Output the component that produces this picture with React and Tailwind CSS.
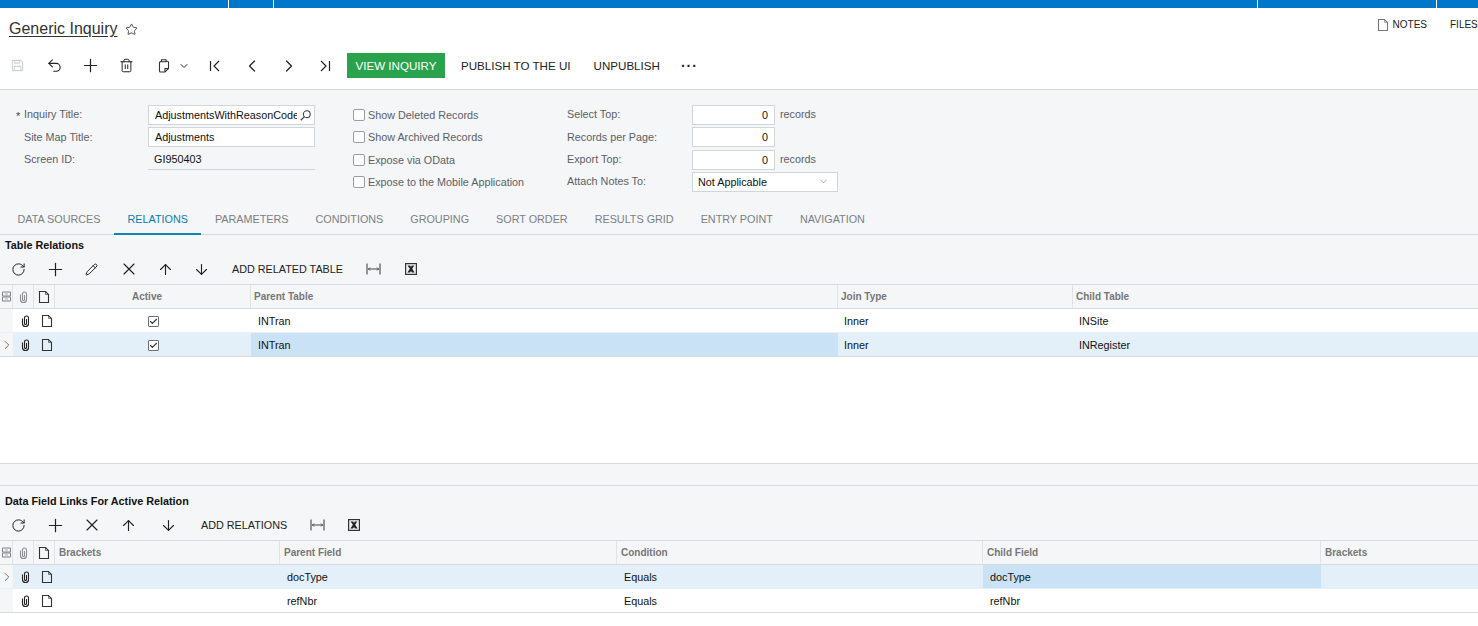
import React from 'react';
import { Plus, X, ArrowUp, ArrowDown, ChevronLeft, ChevronRight, ChevronDown, Star, Pencil, RotateCw, Undo2, Trash2, Check } from 'lucide-react';

const FONT = "font-['Liberation_Sans',Arial,sans-serif]";

const NoteIcon = ({ className = '' }) => (
  <svg width="12" height="14" viewBox="0 0 12 14" fill="none" stroke="currentColor" strokeWidth="1.1" className={className}>
    <path d="M1.5 1.5h6l3 3v8h-9z" />
    <path d="M7.5 1.5v3h3" strokeWidth="0.6" />
  </svg>
);

const ClipIcon = ({ color = '#222', width = 1.1 }) => (
  <svg width="9" height="12" viewBox="0 0 9 12" fill="none" stroke={color} strokeWidth={width}>
    <path d="M1.5 3.5v5a3 3 0 0 0 6 0V3a2 2 0 0 0-4 0v5.5a1 1 0 0 0 2 0V4" />
  </svg>
);

const LensIcon = () => (
  <svg width="11" height="11" viewBox="0 0 11 11" fill="none" stroke="#444" strokeWidth="1.1" className="shrink-0">
    <circle cx="6.8" cy="4.2" r="3.4" />
    <path d="M4.4 6.6L0.8 10.2" strokeWidth="1.3" />
  </svg>
);

const SaveIcon = () => (
  <svg width="13" height="13" viewBox="0 0 14 14" fill="none" stroke="#d0d3d6" strokeWidth="1.2">
    <path d="M1.5 1.5h9l2 2v9h-11z" />
    <path d="M4 1.5v3h5v-3M3.5 12.5v-4.5h7v4.5" />
  </svg>
);

const PasteIcon = () => (
  <svg width="12" height="14" viewBox="0 0 12 14" fill="none" stroke="#333" strokeWidth="1.1">
    <path d="M3 2.2H9.5a1 1 0 0 1 1 1V9.5L7 13H2.5a1 1 0 0 1-1-1V3.2z" />
    <path d="M3.5 0.8h4.5v2H3.5z" fill="#fff" />
    <path d="M7 13V9.5h3.5" />
  </svg>
);

const FirstIcon = () => (
  <svg width="12" height="12" viewBox="0 0 12 12" fill="none" stroke="#222" strokeWidth="1.2">
    <path d="M1.5 1v10M10 1L5 6l5 5" />
  </svg>
);

const LastIcon = () => (
  <svg width="12" height="12" viewBox="0 0 12 12" fill="none" stroke="#222" strokeWidth="1.2">
    <path d="M10.5 1v10M2 1l5 5-5 5" />
  </svg>
);

const FitIcon = () => (
  <svg width="15" height="12" viewBox="0 0 15 12" fill="none" stroke="#444" strokeWidth="1.1">
    <path d="M1 0.5v11M14 0.5v11M2 6h11" />
    <path d="M4 4.5L2.5 6 4 7.5M11 4.5L12.5 6 11 7.5" strokeWidth="0.9" />
  </svg>
);

const ExcelIcon = () => (
  <svg width="12" height="12" viewBox="0 0 12 12" fill="none">
    <rect x="0.6" y="0.6" width="10.8" height="10.8" stroke="#333" strokeWidth="1.2" fill="#eef0f2" />
    <path d="M2.5 2.5h2.7L6 3.9l.8-1.4h2.4L7.2 5.8l2.4 3.7H6.9L6 8 5 9.5H2.4l2.5-3.7z" fill="#222" />
  </svg>
);

const CheckIcon = ({ checked }) => (
  <span className="flex h-[11px] w-[11px] items-center justify-center rounded-[1px] border border-[#6b6f73] bg-white">
    {checked && <Check size={9} strokeWidth={3} color="#333" />}
  </span>
);

const IconBtn = ({ x, children }) => (
  <span className={`flex h-full items-center justify-center [&>svg]:shrink-0 ${x}`}>{children}</span>
);

const FormLabel = ({ children, star }) => (
  <div className="relative flex h-5 items-center pb-px text-[#5c6066]">
    {star && <span className="absolute left-[-8px] top-[3px] text-[#444]">*</span>}
    {children}
  </div>
);

const Box = ({ children, className = '' }) => (
  <div className={`flex h-5 items-center border border-[#d2d5d9] bg-white px-[6px] text-[#111] ${className}`}>{children}</div>
);

const Toggle = ({ label }) => (
  <label className="flex h-5 items-center gap-[3px] text-[#5c6066]">
    <span className="h-3 w-3 rounded-[2px] border border-[#9a9ea3] bg-white" />
    {label}
  </label>
);

const TABS = ['DATA SOURCES', 'RELATIONS', 'PARAMETERS', 'CONDITIONS', 'GROUPING', 'SORT ORDER', 'RESULTS GRID', 'ENTRY POINT', 'NAVIGATION'];

const HeadCells = () => (
  <>
    <div className="flex items-center justify-center border-r border-[#e1e3e6]">
      <svg width="9" height="11" viewBox="0 0 9 11" fill="none" stroke="#808387" strokeWidth="1">
        <path d="M.5 1h8v4h-8zM.5 6h8v4h-8z" />
        <path d="M3 3h3M3 8h3" stroke="#a5a8ab" />
      </svg>
    </div>
    <div className="flex items-center justify-center border-r border-[#e1e3e6]">
      <ClipIcon color="#8c8f93" />
    </div>
    <div className="flex items-center justify-center border-r border-[#e1e3e6] text-[#333]">
      <NoteIcon />
    </div>
  </>
);

const RowIcons = ({ marker }) => (
  <>
    <div className="flex items-center justify-center bg-[#f4f6f8] text-[#666]">
      {marker && <ChevronRight size={14} strokeWidth={1.6} className="shrink-0" />}
    </div>
    <div className="flex items-center justify-center pl-1 pt-px">
      <ClipIcon />
    </div>
    <div className="flex items-center justify-center pl-1 pt-px text-[#333]">
      <NoteIcon />
    </div>
  </>
);

const RELATION_COLS = 'grid-cols-[13px_21px_21px_196px_587px_235px_1fr]';
const LINK_COLS = 'grid-cols-[13px_21px_21px_225px_337px_366px_338px_1fr]';

const Header = ({ cols, items, pad }) => (
  <div className={`grid h-[25px] border-y border-[#d8dadd] bg-[#f4f6f8] text-[10px] font-bold text-[#777] ${cols}`}>
    <HeadCells />
    {items.map((item, i) => (
      <div key={i} className={`flex items-center border-r border-[#e1e3e6] last:border-r-0 ${pad} ${item === 'Active' ? 'justify-center pr-[14px]' : ''}`}>{item}</div>
    ))}
  </div>
);

const TableToolbar = ({ children }) => (
  <div className="flex h-7 items-center pb-[2px] text-[#222]">{children}</div>
);

const App = () => {
  return (
    <div className={`flex h-[626px] w-[1478px] flex-col overflow-hidden bg-white text-[10.8px] text-[#111] ${FONT}`}>
      {/* barra superior */}
      <div className="flex h-2 shrink-0 bg-[#0077c8]">
        <div className="w-[229px] border-r border-white" />
        <div className="w-[45px] border-r border-white" />
        <div className="w-[984px] border-r border-white" />
        <div className="w-[179px] border-r border-white" />
      </div>

      {/* titulo */}
      <div className="flex h-9 shrink-0 items-start">
        <div className="flex items-center pl-[9px] pt-[9px]">
          <span className="text-[16px] leading-[23px] text-[#333] underline underline-offset-2">Generic Inquiry</span>
          <Star size={13} strokeWidth={1.6} color="#333" className="ml-[7px] mt-[2px]" />
        </div>
        <div className="ml-auto flex items-center pt-[9px] text-[10px] text-[#222]">
          <NoteIcon className="mr-[3px] text-[#777]" />
          <span className="ml-[1px]">NOTES</span>
          <span className="ml-[23px] w-[28px] overflow-hidden whitespace-nowrap">FILES</span>
        </div>
      </div>

      {/* acciones */}
      <div className="flex h-[46px] shrink-0 items-center border-b border-[#d4d6d9] pb-[2px] text-[11.6px] text-[#222]">
        <IconBtn x="ml-[10px] w-[14px]"><SaveIcon /></IconBtn>
        <IconBtn x="ml-[22px] w-[16px]"><Undo2 size={17} strokeWidth={1.5} /></IconBtn>
        <IconBtn x="ml-[21px] w-[14px]"><Plus size={21} strokeWidth={1.4} /></IconBtn>
        <IconBtn x="ml-[22px] w-[14px]"><Trash2 size={15} strokeWidth={1.6} /></IconBtn>
        <IconBtn x="ml-[24px] w-[14px]"><PasteIcon /></IconBtn>
        <IconBtn x="ml-[8px] w-[10px]"><ChevronDown size={12} strokeWidth={2} /></IconBtn>
        <IconBtn x="ml-[20px] w-[12px]"><FirstIcon /></IconBtn>
        <IconBtn x="ml-[25px] w-[12px]"><ChevronLeft size={20} strokeWidth={1.5} /></IconBtn>
        <IconBtn x="ml-[25px] w-[12px]"><ChevronRight size={20} strokeWidth={1.5} /></IconBtn>
        <IconBtn x="ml-[24px] w-[12px]"><LastIcon /></IconBtn>
        <button className="ml-[16px] flex h-[25px] w-[98px] items-center justify-center bg-[#2ba24c] text-[11.6px] text-white">VIEW INQUIRY</button>
        <span className="ml-[16px]">PUBLISH TO THE UI</span>
        <span className="ml-[23px]">UNPUBLISH</span>
        <span className="ml-[21px] text-[14px] font-bold leading-none tracking-[1px]">···</span>
      </div>

      {/* formulario */}
      <div className="flex h-[115px] shrink-0 bg-[#f4f6f8] pt-[15px]">
        <div className="ml-6 flex w-[124px] flex-col gap-[2.3px]">
          <FormLabel star>Inquiry Title:</FormLabel>
          <FormLabel>Site Map Title:</FormLabel>
          <FormLabel>Screen ID:</FormLabel>
        </div>
        <div className="flex w-[167px] flex-col gap-[2.3px]">
          <Box className="justify-between pr-[3px]">
            <span className="w-[142px] shrink-0 overflow-hidden whitespace-nowrap">AdjustmentsWithReasonCodes</span>
            <LensIcon />
          </Box>
          <Box>Adjustments</Box>
          <div className="flex h-5 items-center border-b border-[#d2d5d9] px-[6px]">GI950403</div>
        </div>
        <div className="ml-[38px] flex w-[214px] flex-col gap-[2.3px]">
          <Toggle label="Show Deleted Records" />
          <Toggle label="Show Archived Records" />
          <Toggle label="Expose via OData" />
          <Toggle label="Expose to the Mobile Application" />
        </div>
        <div className="flex w-[125px] flex-col gap-[2.3px]">
          <FormLabel>Select Top:</FormLabel>
          <FormLabel>Records per Page:</FormLabel>
          <FormLabel>Export Top:</FormLabel>
          <FormLabel>Attach Notes To:</FormLabel>
        </div>
        <div className="flex flex-col gap-[2.3px]">
          <div className="flex items-center gap-[5px] pb-px text-[#5c6066]">
            <Box className="-mb-px w-[83px] justify-end pr-[6px]">0</Box>records
          </div>
          <Box className="w-[83px] justify-end pr-[6px]">0</Box>
          <div className="flex items-center gap-[5px] pb-px text-[#5c6066]">
            <Box className="-mb-px w-[83px] justify-end pr-[6px]">0</Box>records
          </div>
          <Box className="w-[146px] justify-between pr-2">
            <span className="-ml-px">Not Applicable</span>
            <ChevronDown size={11} strokeWidth={1.4} color="#777" />
          </Box>
        </div>
      </div>

      {/* pestañas */}
      <div className="flex h-[30px] shrink-0 border-b border-[#d4d6d9] bg-[#f4f6f8] pl-1">
        {TABS.map(tab => (
          <div
            key={tab}
            className={`-mb-px flex items-center border-b-2 px-[13.5px] ${tab === 'RELATIONS' ? 'border-[#0f86b5] text-[#0a7db0]' : 'border-transparent text-[#7b7f85]'}`}
          >
            {tab}
          </div>
        ))}
      </div>

      {/* relaciones */}
      <div className="flex shrink-0 flex-col bg-[#f4f6f8]">
        <div className="flex h-[21px] items-center pl-[5px] font-bold text-[#111]">Table Relations</div>
        <TableToolbar>
          <IconBtn x="ml-[12px] w-[13px]"><RotateCw size={15} strokeWidth={1.6} /></IconBtn>
          <IconBtn x="ml-[24px] w-[13px]"><Plus size={21} strokeWidth={1.4} /></IconBtn>
          <IconBtn x="ml-[23px] w-[13px]"><Pencil size={13} strokeWidth={1.8} /></IconBtn>
          <IconBtn x="ml-[24px] w-[13px]"><X size={20} strokeWidth={1.4} /></IconBtn>
          <IconBtn x="ml-[24px] w-[13px]"><ArrowUp size={17} strokeWidth={1.6} /></IconBtn>
          <IconBtn x="ml-[23px] w-[13px]"><ArrowDown size={17} strokeWidth={1.6} /></IconBtn>
          <span className="ml-[24px]">ADD RELATED TABLE</span>
          <IconBtn x="ml-[23px] w-[15px]"><FitIcon /></IconBtn>
          <IconBtn x="ml-[24px] w-[12px]"><ExcelIcon /></IconBtn>
        </TableToolbar>
      </div>
      <Header cols={RELATION_COLS} pad="px-[3px]" items={['Active', 'Parent Table', 'Join Type', 'Child Table']} />
      <div className={`grid h-6 border-b border-[#eceef0] ${RELATION_COLS}`}>
        <RowIcons />
        <div className="flex items-center justify-center pt-px"><CheckIcon checked /></div>
        <div className="flex items-center px-[7px] pt-px">INTran</div>
        <div className="flex items-center px-[6px] pt-px">Inner</div>
        <div className="flex items-center px-[6px] pt-px">INSite</div>
      </div>
      <div className={`grid h-6 border-b border-[#d8dadd] bg-[#e3f0fa] ${RELATION_COLS}`}>
        <RowIcons marker />
        <div className="flex items-center justify-center pt-px"><CheckIcon checked /></div>
        <div className="flex items-center bg-[#c9e2f5] px-[7px] pt-px">INTran</div>
        <div className="flex items-center px-[6px] pt-px">Inner</div>
        <div className="flex items-center px-[6px] pt-px">INRegister</div>
      </div>
      <div className="h-[106px] shrink-0 bg-white" />

      {/* separador */}
      <div className="h-[23px] shrink-0 border-y border-[#d8dadd] bg-[#f4f6f8]" />

      {/* enlaces */}
      <div className="flex shrink-0 flex-col bg-[#f4f6f8]">
        <div className="flex h-[26px] items-center pl-[5px] pt-1 font-bold text-[#111]">Data Field Links For Active Relation</div>
        <TableToolbar>
          <IconBtn x="ml-[12px] w-[13px]"><RotateCw size={15} strokeWidth={1.6} /></IconBtn>
          <IconBtn x="ml-[24px] w-[13px]"><Plus size={21} strokeWidth={1.4} /></IconBtn>
          <IconBtn x="ml-[23px] w-[13px]"><X size={20} strokeWidth={1.4} /></IconBtn>
          <IconBtn x="ml-[24px] w-[13px]"><ArrowUp size={17} strokeWidth={1.6} /></IconBtn>
          <IconBtn x="ml-[27px] w-[13px]"><ArrowDown size={17} strokeWidth={1.6} /></IconBtn>
          <span className="ml-[26px]">ADD RELATIONS</span>
          <IconBtn x="ml-[23px] w-[15px]"><FitIcon /></IconBtn>
          <IconBtn x="ml-[23px] w-[12px]"><ExcelIcon /></IconBtn>
        </TableToolbar>
      </div>
      <Header cols={LINK_COLS} pad="px-1" items={['Brackets', 'Parent Field', 'Condition', 'Child Field', 'Brackets']} />
      <div className={`grid h-6 border-b border-transparent bg-[#e3f0fa] ${LINK_COLS}`}>
        <RowIcons marker />
        <div />
        <div className="flex items-center px-[7px] pt-px">docType</div>
        <div className="flex items-center px-[7px] pt-px">Equals</div>
        <div className="flex items-center bg-[#c9e2f5] px-[7px] pt-px">docType</div>
        <div />
      </div>
      <div className={`grid h-6 border-b border-[#d8dadd] ${LINK_COLS}`}>
        <RowIcons />
        <div />
        <div className="flex items-center px-[7px] pt-px">refNbr</div>
        <div className="flex items-center px-[7px] pt-px">Equals</div>
        <div className="flex items-center px-[7px] pt-px">refNbr</div>
        <div />
      </div>
    </div>
  );
};

export default App;
